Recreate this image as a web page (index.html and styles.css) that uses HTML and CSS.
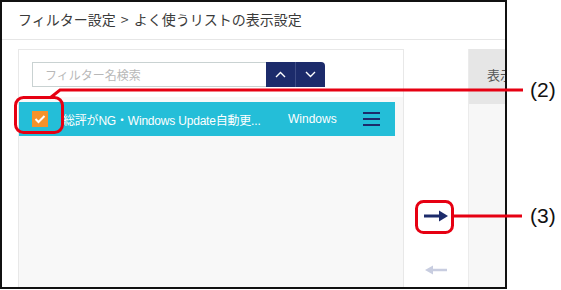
FILE: index.html
```html
<!doctype html>
<html lang="ja">
  <head>
    <meta charset="UTF-8" />
    <meta name="viewport" content="width=device-width, initial-scale=1.0" />
    <title>フィルター設定</title>
    <link rel="stylesheet" href="styles.css">
  </head>
  <body>
    <div class="page">
      <div class="screen">
        <div class="screen-title">フィルター設定 <span class="crumb-sep">&gt;</span> よく使うリストの表示設定</div>
        <div class="screen-body">
          <div class="list-panel">
            <div class="search-bar">
              <input class="search-input" type="text" placeholder="フィルター名検索" />
              <button class="sort-btn" type="button">
                <svg width="11" height="7" viewBox="0 0 11 7"><path d="M1 6 L5.5 1.5 L10 6" fill="none" stroke="#fff" stroke-width="1.4"/></svg>
              </button>
              <button class="sort-btn sort-btn-last" type="button">
                <svg width="11" height="7" viewBox="0 0 11 7"><path d="M1 1 L5.5 5.5 L10 1" fill="none" stroke="#fff" stroke-width="1.4"/></svg>
              </button>
            </div>
            <div class="list-rows">
              <div class="list-row selected">
                <span class="row-check">
                  <svg width="12" height="10" viewBox="0 0 12 10"><path d="M1.5 5 L4.5 8 L10.5 2" fill="none" stroke="#fff" stroke-width="2"/></svg>
                </span>
                <span class="row-name">総評がNG・Windows Update自動更...</span>
                <span class="row-os">Windows</span>
                <span class="row-menu"><i></i><i></i><i></i></span>
              </div>
            </div>
          </div>
          <div class="move-col">
            <button class="move-btn" type="button">
              <svg width="26" height="14" viewBox="0 0 26 14"><path d="M1 7 H18" stroke="#1c2b6b" stroke-width="3"/><path d="M16 1.5 L25 7 L16 12.5 Z" fill="#1c2b6b"/></svg>
            </button>
            <button class="move-btn move-btn-off" type="button">
              <svg width="24" height="12" viewBox="0 0 24 12"><path d="M23 6 H7" stroke="#c8cde0" stroke-width="2.5"/><path d="M9 1.5 L1 6 L9 10.5 Z" fill="#c8cde0"/></svg>
            </button>
          </div>
          <div class="dest-panel">
            <div class="dest-head">表示順</div>
            <div class="dest-rows"></div>
          </div>
        </div>
      </div>

      <svg class="callouts" width="561" height="290" viewBox="0 0 561 290">
        <rect x="15.5" y="97.5" width="47" height="35" rx="8" fill="none" stroke="#e60012" stroke-width="3"/>
        <polyline points="50,98 60,90 523,90" fill="none" stroke="#e60012" stroke-width="3"/>
        <rect x="416.5" y="201.5" width="36" height="31" rx="7" fill="none" stroke="#e60012" stroke-width="3"/>
        <line x1="453" y1="216" x2="522" y2="216" stroke="#e60012" stroke-width="3"/>
      </svg>
      <div class="callout-label label-2">(2)</div>
      <div class="callout-label label-3">(3)</div>
    </div>
  </body>
</html>
```

FILE: styles.css
```css
body {
  margin: 0;
  background: #fff;
  font-family: "Liberation Sans", "Noto Sans CJK JP", sans-serif;
}
.page {
  position: relative;
  width: 561px;
  height: 290px;
}
.screen {
  width: 507px;
  height: 289px;
  box-sizing: border-box;
  border: 2px solid #111;
  overflow: hidden;
  display: flex;
  flex-direction: column;
  background: #fff;
}
.screen-title {
  height: 38px;
  box-sizing: border-box;
  padding: 7px 0 0 16px;
  border-bottom: 1px solid #e6e6e6;
  font-family: "Noto Sans CJK JP", sans-serif;
  font-size: 14px;
  line-height: 20px;
  color: #3a3a3a;
  white-space: nowrap;
}
.crumb-sep {
  margin: 0 2px;
}
.screen-body {
  flex: 1;
  display: flex;
  padding: 9px 0 0 16px;
  min-height: 0;
}
.list-panel {
  width: 386px;
  flex-shrink: 0;
  box-sizing: border-box;
  border: 1px solid #e8e8e8;
  border-bottom: none;
  display: flex;
  flex-direction: column;
}
.search-bar {
  display: flex;
  padding: 12px 0 10px 13px;
}
.search-input {
  width: 234px;
  height: 25px;
  box-sizing: border-box;
  margin: 0;
  border: 1px solid #c9d2d2;
  border-right: none;
  padding: 0 12px;
  font-family: "Noto Sans CJK JP", sans-serif;
  font-size: 12px;
  outline: none;
}
.search-input::placeholder {
  color: #b8b8b8;
}
.sort-btn {
  width: 30px;
  height: 25px;
  margin: 0;
  padding: 0;
  border: none;
  border-right: 1px solid #3e4c86;
  background: #1c2b6b;
  display: flex;
  align-items: center;
  justify-content: center;
}
.sort-btn-last {
  width: 29px;
  border-right: none;
  border-radius: 0 4px 0 0;
}
.list-rows {
  flex: 1;
  background: #f8f8f8;
  padding-top: 5px;
}
.list-row {
  width: 376px;
  height: 34px;
  box-sizing: border-box;
  display: flex;
  align-items: center;
  padding-left: 13px;
  color: #fff;
  font-size: 12px;
  white-space: nowrap;
}
.list-row.selected {
  background: #24bed8;
}
.row-check {
  width: 16px;
  height: 16px;
  background: #f5922a;
  display: flex;
  align-items: center;
  justify-content: center;
}
.row-name {
  width: 225px;
  margin-left: 15px;
  overflow: hidden;
  letter-spacing: -0.2px;
}
.row-os {
  width: 75px;
}
.row-menu {
  width: 17px;
  display: flex;
  flex-direction: column;
  gap: 3.5px;
}
.row-menu i {
  display: block;
  height: 2.5px;
  background: #1c2b6b;
}
.move-col {
  width: 64px;
  flex-shrink: 0;
  display: flex;
  flex-direction: column;
  align-items: center;
  padding-top: 151px;
  gap: 22px;
}
.move-btn {
  width: 37px;
  height: 32px;
  margin: 0;
  padding: 0;
  border: none;
  background: transparent;
  display: flex;
  align-items: center;
  justify-content: center;
}
.dest-panel {
  flex: 1;
  min-width: 0;
  border-left: 1px solid #ebebeb;
  background: #f7f7f7;
}
.dest-head {
  height: 55px;
  box-sizing: border-box;
  padding: 18px 0 0 18px;
  background: #e6e6e6;
  font-family: "Noto Sans CJK JP", sans-serif;
  font-size: 13px;
  line-height: 16px;
  color: #555;
  white-space: nowrap;
}
.callouts {
  position: absolute;
  left: 0;
  top: 0;
  pointer-events: none;
}
.callout-label {
  position: absolute;
  left: 530px;
  font-size: 21px;
  line-height: 24px;
  color: #111;
}
.label-2 {
  top: 78px;
}
.label-3 {
  top: 204px;
}
```
